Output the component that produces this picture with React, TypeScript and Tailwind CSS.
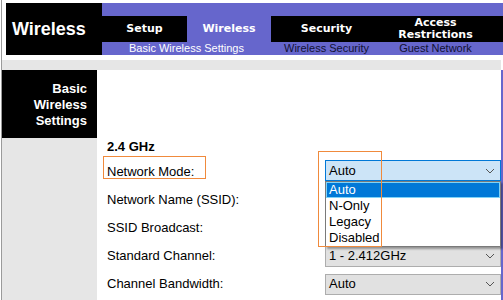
import React from "react";

const Chevron = () => (
  <svg width="10" height="6" viewBox="0 0 10 6" className="shrink-0">
    <polyline points="1,1 5,5 9,1" fill="none" stroke="#555" strokeWidth="1" />
  </svg>
);

function Select({ value, active }: { value: string; active?: boolean }) {
  return (
    <div
      className={
        active
          ? "flex h-[21px] w-[176px] items-center justify-between border border-[#0078d7] bg-[#cce4f7] pl-[3px] pr-[5px] text-[13px] text-black"
          : "flex h-[21px] w-[176px] items-center justify-between border border-[#adadad] bg-[#e1e1e1] pl-[3px] pr-[5px] text-[13px] text-black"
      }
    >
      <span>{value}</span>
      <Chevron />
    </div>
  );
}

export default function App() {
  const tab = "font-['DejaVu_Sans',sans-serif] text-[11px] font-bold text-white";
  return (
    <div className="relative h-[300px] w-[503px] overflow-hidden bg-white font-['Liberation_Sans',Arial,sans-serif]">
      <div className="flex h-full pl-[1px]">
        <div className="w-[1px] bg-[#9a9a9a]" />
        <div className="flex flex-1 flex-col">
          {/* header */}
          <div className="mt-[3px] flex h-[52px] pl-[4px]">
            <div className="flex w-[96px] items-center bg-black pl-[6px] text-[18px] font-bold text-white">
              Wireless
            </div>
            <div className="flex flex-1 flex-col overflow-hidden bg-[#6666cc]">
              <div className="h-[13px]" />
              <div className="flex h-[26px]">
                <div className={`flex w-[85px] items-center justify-center bg-black ${tab}`}>Setup</div>
                <div className={`flex w-[84px] items-center justify-center ${tab}`}>Wireless</div>
                <div className={`flex w-[111px] items-center justify-center bg-black ${tab}`}>Security</div>
                <div className={`flex w-[107px] flex-col items-center justify-center bg-black leading-[12px] ${tab}`}>
                  <span>Access</span>
                  <span>Restrictions</span>
                </div>
                <div className="flex-1 bg-black" />
              </div>
              <div className="flex h-[13px] items-center whitespace-nowrap text-[11px] leading-[13px]">
                <div className="w-[169px] text-center text-white">Basic Wireless Settings</div>
                <div className="w-[111px] text-center text-[#111133]">Wireless Security</div>
                <div className="w-[107px] text-center text-[#111133]">Guest Network</div>
              </div>
            </div>
          </div>
          <div className="h-[5px]" />
          <div className="mr-[2px] h-[10px] bg-[#e6e6e6]" />
          {/* content */}
          <div className="flex flex-1">
            <div className="flex w-[95px] flex-col bg-[#e6e6e6]">
              <div className="flex h-[68px] flex-col items-end bg-black pr-[10px] pt-[11px] text-[13px] font-bold leading-[16px] text-white">
                <span>Basic</span>
                <span>Wireless</span>
                <span>Settings</span>
              </div>
            </div>
            <div className="relative flex flex-1 flex-col pl-[10px] pt-[69px] text-[13px] text-black">
              <div className="h-[16px] font-bold leading-[16px]">2.4 GHz</div>
              <div className="h-[3px]" />
              <div className="flex h-[28px] items-center">
                <div className="relative w-[218px]">
                  <span>Network Mode:</span>
                  <div className="absolute left-[-4px] top-[-6px] h-[23px] w-[103px] border border-[#f08a3c]" />
                </div>
                <div className="mb-[3px]">
                  <Select value="Auto" active />
                </div>
              </div>
              <div className="flex h-[28px] items-center">
                <div className="w-[218px]">Network Name (SSID):</div>
              </div>
              <div className="flex h-[28px] items-center">
                <div className="w-[218px]">SSID Broadcast:</div>
              </div>
              <div className="flex h-[28px] items-center">
                <div className="w-[218px]">Standard Channel:</div>
                <Select value="1 - 2.412GHz" />
              </div>
              <div className="flex h-[28px] items-center">
                <div className="w-[218px]">Channel Bandwidth:</div>
                <Select value="Auto" />
              </div>

              {/* open dropdown list */}
              <div className="absolute left-[228px] top-[111px] w-[176px] border border-[#7a7a7a] bg-white text-[13px] leading-[16px] shadow-[2px_2px_2px_rgba(0,0,0,0.35)]">
                <div className="h-[16px] border border-[#7fd3f7] bg-[#0078d7] pl-[2px] leading-[14px] text-white">Auto</div>
                <div className="h-[16px] pl-[3px]">N-Only</div>
                <div className="h-[16px] pl-[3px]">Legacy</div>
                <div className="h-[16px] pl-[3px]">Disabled</div>
              </div>
              <div className="absolute left-[221px] top-[81px] h-[96px] w-[64px] border border-[#f08a3c]" />
            </div>
            <div className="w-[2px] bg-[#6666cc]" />
          </div>
        </div>
      </div>
    </div>
  );
}
